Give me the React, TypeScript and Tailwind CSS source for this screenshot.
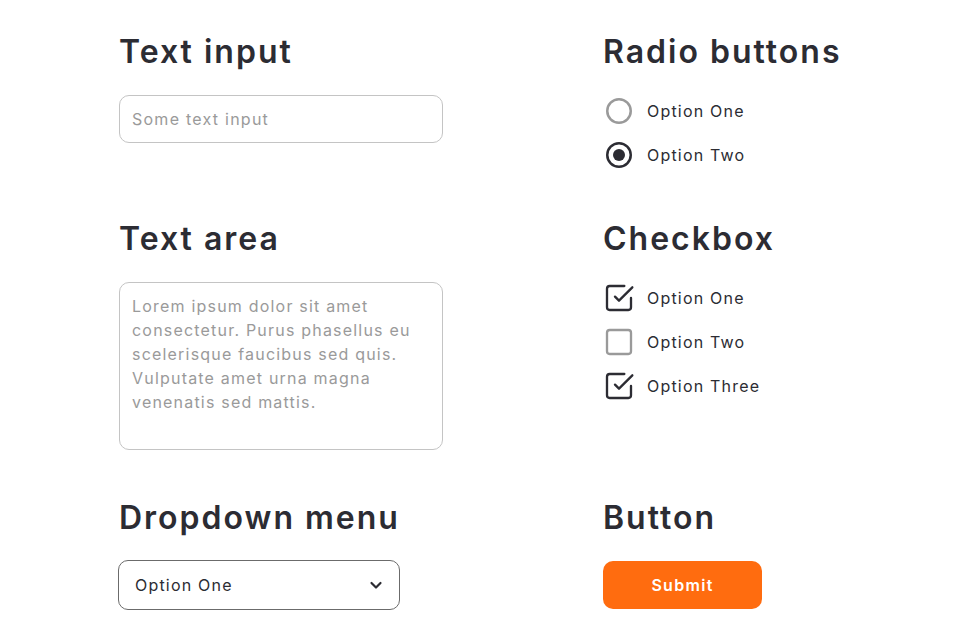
import React from "react";

const font = { fontFamily: "Inter, 'DejaVu Sans', sans-serif" };

function Heading({ children }: { children: React.ReactNode }) {
  return (
    <h2 className="text-[32px] leading-[38px] font-semibold tracking-[2px] text-[#2c2c33] mb-[24px]">
      {children}
    </h2>
  );
}

function Radio({ checked, label }: { checked?: boolean; label: string }) {
  return (
    <div className="flex items-center h-8 gap-3">
      <div className="w-8 h-8 flex items-center justify-center">
        <svg width="32" height="32" viewBox="0 0 32 32">
          <circle
            cx="16"
            cy="16"
            r="11.75"
            fill="none"
            stroke={checked ? "#2c2c33" : "#9a9a9a"}
            strokeWidth="2.5"
          />
          {checked && <circle cx="16" cy="16" r="6" fill="#2c2c33" />}
        </svg>
      </div>
      <span className="text-[16px] tracking-[1.2px] text-[#2c2c33]">{label}</span>
    </div>
  );
}

function Checkbox({ checked, label }: { checked?: boolean; label: string }) {
  return (
    <div className="flex items-center h-8 gap-3">
      <div className="w-8 h-8 flex items-center justify-center">
        {checked ? (
          <svg width="32" height="32" viewBox="0 0 24 24" fill="none" stroke="#2c2c33" strokeWidth="1.75" strokeLinecap="round" strokeLinejoin="round">
            <polyline points="9 11 12 14 22 4" />
            <path d="M21 12v7a2 2 0 0 1-2 2H5a2 2 0 0 1-2-2V5a2 2 0 0 1 2-2h11" />
          </svg>
        ) : (
          <svg width="32" height="32" viewBox="0 0 24 24" fill="none" stroke="#9a9a9a" strokeWidth="1.75" strokeLinejoin="round">
            <rect x="3" y="3" width="18" height="18" rx="2" />
          </svg>
        )}
      </div>
      <span className="text-[16px] tracking-[1.2px] text-[#2c2c33]">{label}</span>
    </div>
  );
}

export default function App() {
  return (
    <div className="w-[961px] h-[641px] bg-white overflow-hidden" style={font}>
      <div className="grid grid-cols-[484px_1fr] gap-y-[49px] pl-[119px] pt-[33px]">
        <section>
          <Heading>Text input</Heading>
          <input
            className="w-[324px] h-[48px] rounded-[10px] border border-[#c4c4c4] px-3 text-[16px] tracking-[1.25px] text-[#2c2c33] placeholder:text-[#9a9a9a] outline-none"
            placeholder="Some text input"
            style={font}
          />
        </section>
        <section>
          <Heading>Radio buttons</Heading>
          <div className="flex flex-col gap-3">
            <Radio label="Option One" />
            <Radio checked label="Option Two" />
          </div>
        </section>

        <section>
          <Heading>Text area</Heading>
          <div className="w-[324px] h-[168px] rounded-[10px] border border-[#c4c4c4] px-3 pt-[11px] text-[16px] tracking-[1.2px] leading-[24px] text-[#9a9a9a]">
            <div className="whitespace-nowrap">Lorem ipsum dolor sit amet</div>
            <div className="whitespace-nowrap">consectetur. Purus phasellus eu</div>
            <div className="whitespace-nowrap">scelerisque faucibus sed quis.</div>
            <div className="whitespace-nowrap">Vulputate amet urna magna</div>
            <div className="whitespace-nowrap">venenatis sed mattis.</div>
          </div>
        </section>
        <section>
          <Heading>Checkbox</Heading>
          <div className="flex flex-col gap-3">
            <Checkbox checked label="Option One" />
            <Checkbox label="Option Two" />
            <Checkbox checked label="Option Three" />
          </div>
        </section>

        <section>
          <Heading>Dropdown menu</Heading>
          <div className="-ml-px -mt-px w-[282px] h-[50px] rounded-[10px] border border-[#6b6b6b] flex items-center justify-between pl-4 pr-4">
            <span className="text-[16px] tracking-[1.2px] text-[#2c2c33]">Option One</span>
            <svg width="14" height="14" viewBox="0 0 14 14" fill="none" stroke="#2c2c33" strokeWidth="2.2" strokeLinecap="round" strokeLinejoin="round">
              <polyline points="2.5 5 7 9.5 11.5 5" />
            </svg>
          </div>
        </section>
        <section>
          <Heading>Button</Heading>
          <button className="w-[159px] h-[48px] rounded-[10px] bg-[#ff6c0f] text-white text-[16px] tracking-[1.3px] font-semibold" style={font}>
            Submit
          </button>
        </section>
      </div>
    </div>
  );
}
